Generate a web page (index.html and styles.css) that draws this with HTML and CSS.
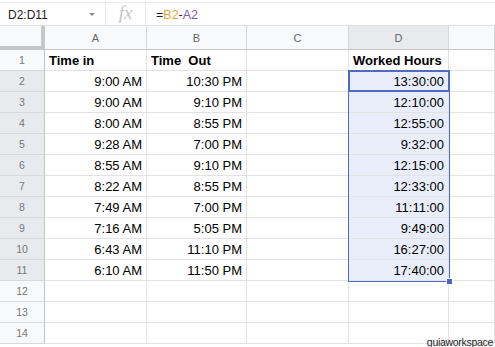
FILE: index.html
```html
<!DOCTYPE html>
<html lang="en">
    <head>
        <meta charset="UTF-8">
        <meta name="viewport" content="width=device-width, initial-scale=1.0">
        <title>Worked Hours</title>
        <link rel="stylesheet" href="styles.css">
    </head>
    <body>

        <!-- Formula bar -->
        <div class="formula-bar">
            <div class="name-box">
                <span class="range">D2:D11</span>
                <span class="caret"></span>
            </div>
            <div class="fx">fx</div>
            <div class="formula">=<span class="ref-b">B2</span>-<span class="ref-a">A2</span></div>
        </div>

        <!-- Sheet grid -->
        <div class="sheet">
            <div class="corner"></div>
            <div class="col-head">A</div>
            <div class="col-head">B</div>
            <div class="col-head">C</div>
            <div class="col-head selected">D</div>
            <div class="col-head"></div>

            <div class="row-head">1</div>
            <div class="cell bold">Time in</div>
            <div class="cell bold">Time  Out</div>
            <div class="cell"></div>
            <div class="cell bold">Worked Hours</div>
            <div class="cell"></div>

            <div class="row-head selected">2</div>
            <div class="cell num">9:00 AM</div>
            <div class="cell num">10:30 PM</div>
            <div class="cell"></div>
            <div class="cell num sel">13:30:00</div>
            <div class="cell"></div>

            <div class="row-head selected">3</div>
            <div class="cell num">9:00 AM</div>
            <div class="cell num">9:10 PM</div>
            <div class="cell"></div>
            <div class="cell num sel">12:10:00</div>
            <div class="cell"></div>

            <div class="row-head selected">4</div>
            <div class="cell num">8:00 AM</div>
            <div class="cell num">8:55 PM</div>
            <div class="cell"></div>
            <div class="cell num sel">12:55:00</div>
            <div class="cell"></div>

            <div class="row-head selected">5</div>
            <div class="cell num">9:28 AM</div>
            <div class="cell num">7:00 PM</div>
            <div class="cell"></div>
            <div class="cell num sel">9:32:00</div>
            <div class="cell"></div>

            <div class="row-head selected">6</div>
            <div class="cell num">8:55 AM</div>
            <div class="cell num">9:10 PM</div>
            <div class="cell"></div>
            <div class="cell num sel">12:15:00</div>
            <div class="cell"></div>

            <div class="row-head selected">7</div>
            <div class="cell num">8:22 AM</div>
            <div class="cell num">8:55 PM</div>
            <div class="cell"></div>
            <div class="cell num sel">12:33:00</div>
            <div class="cell"></div>

            <div class="row-head selected">8</div>
            <div class="cell num">7:49 AM</div>
            <div class="cell num">7:00 PM</div>
            <div class="cell"></div>
            <div class="cell num sel">11:11:00</div>
            <div class="cell"></div>

            <div class="row-head selected">9</div>
            <div class="cell num">7:16 AM</div>
            <div class="cell num">5:05 PM</div>
            <div class="cell"></div>
            <div class="cell num sel">9:49:00</div>
            <div class="cell"></div>

            <div class="row-head selected">10</div>
            <div class="cell num">6:43 AM</div>
            <div class="cell num">11:10 PM</div>
            <div class="cell"></div>
            <div class="cell num sel">16:27:00</div>
            <div class="cell"></div>

            <div class="row-head selected">11</div>
            <div class="cell num">6:10 AM</div>
            <div class="cell num">11:50 PM</div>
            <div class="cell"></div>
            <div class="cell num sel">17:40:00</div>
            <div class="cell"></div>

            <div class="row-head">12</div>
            <div class="cell"></div>
            <div class="cell"></div>
            <div class="cell"></div>
            <div class="cell"></div>
            <div class="cell"></div>

            <div class="row-head">13</div>
            <div class="cell"></div>
            <div class="cell"></div>
            <div class="cell"></div>
            <div class="cell"></div>
            <div class="cell"></div>

            <div class="row-head">14</div>
            <div class="cell"></div>
            <div class="cell"></div>
            <div class="cell"></div>
            <div class="cell"></div>
            <div class="cell"></div>

            <!-- selection overlay -->
            <div class="selection"></div>
            <div class="active-cell"></div>
            <div class="fill-handle"></div>
        </div>

        <div class="watermark">guiaworkspace</div>

    </body>
</html>
```

FILE: styles.css
```css
/* Sheet */
body {
    margin: 0;
    background-color: white;
    font-family: "Liberation Sans", Arial, sans-serif;
    color: #000;
    overflow: hidden;
}
.formula-bar {
    display: flex;
    align-items: center;
    height: 22px;
    margin-top: 2px;
    border-top: 1px solid #ececec;
    border-bottom: 1px solid #e0e0e0;
}
.name-box {
    display: flex;
    align-items: center;
    width: 106px;
    height: 100%;
    padding-left: 8px;
    box-sizing: border-box;
    border-right: 1px solid #e6e6e6;
    font-size: 12px;
    color: #222;
}
.range {
    flex-grow: 1;
    padding-top: 1px;
}
.caret {
    width: 0;
    height: 0;
    margin-right: 10px;
    border-left: 3px solid transparent;
    border-right: 3px solid transparent;
    border-top: 3px solid #8a8a8a;
}
.fx {
    width: 40px;
    height: 100%;
    box-sizing: border-box;
    border-right: 1px solid #e6e6e6;
    font-family: "Liberation Serif", serif;
    font-style: italic;
    font-size: 19px;
    line-height: 20px;
    color: #c4c4c4;
    text-align: center;
}
.formula {
    padding-left: 10px;
    padding-top: 1px;
    font-size: 12.5px;
    color: #222;
}
.ref-b {
    color: #e5a53c;
}
.ref-a {
    color: #7b5bb8;
}
.sheet {
    position: relative;
    display: grid;
    grid-template-columns: 45px 102px 100px 102px 100px 1fr;
    grid-template-rows: 24px repeat(14, 21px);
}
.corner {
    background-color: #f8f9fa;
    border-right: 4px solid #c6c6c6;
    border-bottom: 4px solid #c6c6c6;
    box-sizing: border-box;
}
.col-head {
    background-color: #f8f9fa;
    border-right: 1px solid #d6d6d6;
    border-bottom: 1px solid #c4c4c4;
    font-size: 11px;
    line-height: 24px;
    color: #666;
    text-align: center;
}
.row-head {
    background-color: #f8f9fa;
    border-right: 1px solid #c4c4c4;
    border-bottom: 1px solid #d9d9d9;
    font-size: 10.5px;
    line-height: 21px;
    color: #777;
    text-align: center;
}
.col-head.selected,
.row-head.selected {
    background-color: #e8eaed;
}
.cell {
    border-right: 1px solid #e2e2e2;
    border-bottom: 1px solid #e2e2e2;
    padding: 2px 4px 0;
    font-size: 13px;
    line-height: 18px;
    white-space: pre;
    overflow: hidden;
}
.cell.num {
    text-align: right;
}
.cell.bold {
    font-weight: bold;
}
.cell.sel {
    background-color: #e8edf9;
}
.selection {
    position: absolute;
    left: 348px;
    top: 44px;
    width: 100px;
    height: 210px;
    border: 1px solid #4f6cc0;
}
.active-cell {
    position: absolute;
    left: 348px;
    top: 44px;
    width: 98px;
    height: 18px;
    border: 2px solid #4f6cc0;
}
.fill-handle {
    position: absolute;
    left: 446px;
    top: 252px;
    width: 5px;
    height: 5px;
    background-color: #4a63cf;
    border: 1px solid white;
}
.watermark {
    position: absolute;
    right: 2px;
    top: 336px;
    font-size: 10.5px;
    letter-spacing: -0.3px;
    color: #222;
}
```
